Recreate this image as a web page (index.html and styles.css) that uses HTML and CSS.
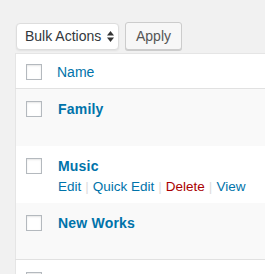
FILE: index.html
```html
<!DOCTYPE html>
<html lang="en">
<head>
    <meta charset="UTF-8">
    <meta name="viewport" content="width=device-width, initial-scale=1.0">
    <title>Categories</title>
    <link rel="stylesheet" href="styles.css">
</head>
<body>

<div class="tablenav">
    <div class="bulk-select">
        <span>Bulk Actions</span>
        <svg class="arrows" width="7" height="11" viewBox="0 0 7 11">
            <path d="M3.5 0 L7 4.5 L0 4.5 Z" fill="#333"/>
            <path d="M0 6.5 L7 6.5 L3.5 11 Z" fill="#333"/>
        </svg>
    </div>
    <button type="button" class="button">Apply</button>
</div>

<table class="list">
    <thead>
        <tr>
            <th class="check"><span class="box"></span></th>
            <th class="name"><a href="#">Name</a></th>
        </tr>
    </thead>
    <tbody>
        <tr class="alt">
            <td class="check"><span class="box"></span></td>
            <td class="name"><a href="#" class="title">Family</a></td>
        </tr>
        <tr>
            <td class="check"><span class="box"></span></td>
            <td class="name">
                <a href="#" class="title">Music</a>
                <div class="row-actions">
                    <a href="#">Edit</a><span class="sep">|</span><a href="#">Quick Edit</a><span class="sep">|</span><a href="#" class="delete">Delete</a><span class="sep">|</span><a href="#">View</a>
                </div>
            </td>
        </tr>
        <tr class="alt">
            <td class="check"><span class="box"></span></td>
            <td class="name"><a href="#" class="title">New Works</a></td>
        </tr>
        <tr>
            <td class="check"><span class="box"></span></td>
            <td class="name"></td>
        </tr>
    </tbody>
</table>

</body>
</html>
```

FILE: styles.css
```css
body {
    margin: 0;
    background: #f1f1f1;
    font-family: "Liberation Sans", Arial, sans-serif;
    font-size: 14px;
    color: #444;
    overflow: hidden;
}
a {
    color: #0073aa;
    text-decoration: none;
}
.tablenav {
    display: flex;
    align-items: center;
    gap: 6px;
    padding: 22px 0 0 16px;
    height: 28px;
}
.bulk-select {
    box-sizing: border-box;
    width: 103px;
    height: 27px;
    display: flex;
    align-items: center;
    justify-content: space-between;
    padding: 0 4px 0 8px;
    background: #fff;
    border: 1px solid #ddd;
    border-radius: 4px;
    box-shadow: 0 1px 2px rgba(0, 0, 0, 0.07);
    color: #32373c;
}
.button {
    box-sizing: border-box;
    width: 57px;
    height: 28px;
    margin: 0;
    padding: 0;
    font-family: inherit;
    font-size: 14px;
    color: #555;
    background: #f7f7f7;
    border: 1px solid #ccc;
    border-radius: 3px;
    box-shadow: 0 1px 0 #ccc;
}
.list {
    margin: 3px 0 0 15px;
    width: 260px;
    border-collapse: collapse;
    border: 1px solid #e5e5e5;
    border-right: none;
    background: #fff;
}
.list th, .list td {
    padding: 0;
    text-align: left;
    vertical-align: top;
}
.list thead th {
    height: 33px;
    border-bottom: 1px solid #e1e1e1;
    vertical-align: middle;
    font-weight: normal;
}
.list thead th.name {
    padding-top: 1px;
}
.check {
    width: 31px;
    padding-left: 10px !important;
}
.box {
    display: block;
    box-sizing: border-box;
    width: 16px;
    height: 16px;
    border: 1px solid #b4b9be;
    background: #fff;
    box-shadow: inset 0 1px 2px rgba(0, 0, 0, 0.1);
}
thead .box {
    margin-top: 1px;
}
tbody .check .box {
    margin-top: 12px;
}
tbody tr {
    height: 57px;
}
tbody tr.alt {
    background: #f9f9f9;
}
tbody tr:last-child {
    border-top: 1px solid #e1e1e1;
}
.list td.name {
    padding-top: 12px;
    padding-left: 1px;
}
.title {
    font-weight: bold;
    font-size: 14px;
    letter-spacing: 0.2px;
}
.row-actions {
    margin-top: 5px;
    font-size: 13.5px;
}
.sep {
    color: #ddd;
    padding: 0 4px;
}
.delete {
    color: #a00;
}
```
